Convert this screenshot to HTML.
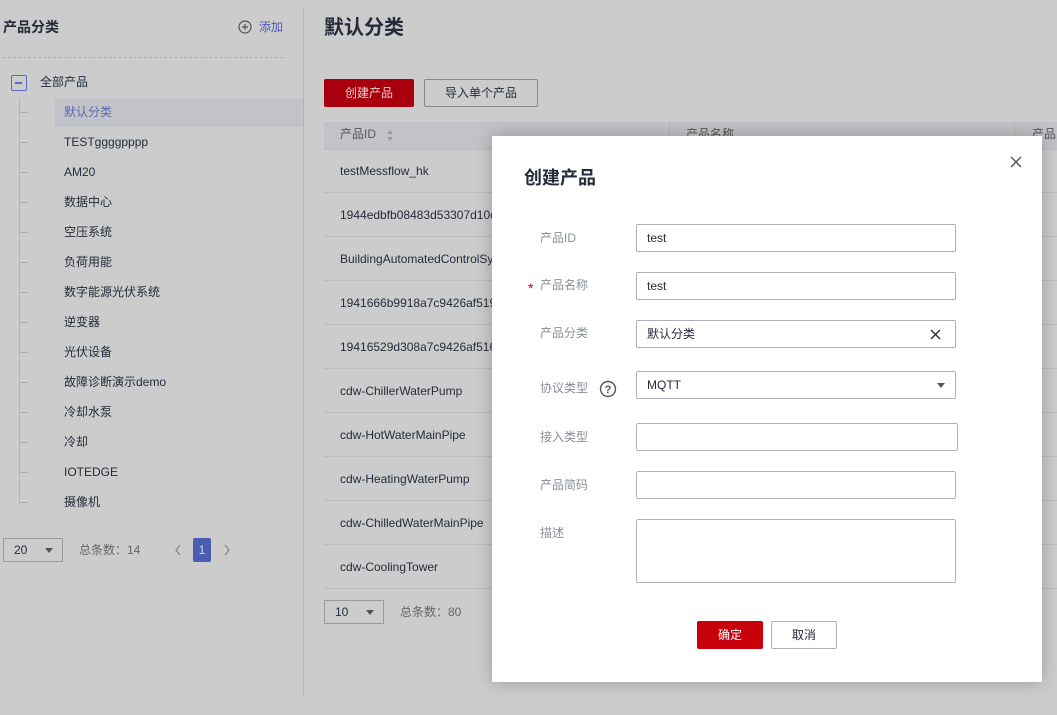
<!DOCTYPE html>
<html><head><meta charset="utf-8"><style>
*{box-sizing:border-box;margin:0;padding:0}
body{width:1057px;height:715px;background:#cccccc;font-family:"Liberation Sans","Noto Sans CJK SC",sans-serif;font-size:12px;line-height:16px;color:#252b3a;position:relative;overflow:hidden}
.a{position:absolute}
.tree{left:64px;font-size:12px;color:#252b3a;height:16px;line-height:16px}
.tick{left:20px;width:8px;height:1px;background:#aaa}
.row{left:324px;width:733px;height:44px;border-bottom:1px solid #bdbdbd}
.row span{position:absolute;left:16px;top:14px;font-size:12px}
.lbl{left:540px;color:#8a8e99;font-size:12px}
.inp{left:636px;width:320px;height:28px;border:1px solid #adb0b8;background:#fff;border-radius:2px;padding:0 10px;line-height:26px;font-size:12px}
</style></head><body>
<div class="a" style="left:3px;top:19px;font-size:14px;font-weight:bold">产品分类</div>
<svg class="a" style="left:238px;top:20px" width="14" height="14" viewBox="0 0 14 14"><circle cx="7" cy="7" r="6" fill="none" stroke="#555" stroke-width="1.2"/><path d="M7 4v6M4 7h6" stroke="#555" stroke-width="1.2"/></svg>
<div class="a" style="left:259px;top:19px;color:#4a5ab3;font-size:12px">添加</div>
<div class="a" style="left:3px;top:57px;width:280px;border-top:1px dashed #b0b0b0"></div>
<div class="a" style="left:11px;top:75px;width:16px;height:16px;border:1.5px solid #5a6ac0;border-radius:2px"><div class="a" style="left:3px;top:6px;width:7px;height:1.5px;background:#5a6ac0"></div></div>
<div class="a" style="left:40px;top:74px">全部产品</div>
<div class="a" style="left:19px;top:98px;width:1px;height:406px;background:#b5b5b5"></div>
<div class="a" style="left:55px;top:99px;width:248px;height:28px;background:#c2c3c8"></div>
<div class="a tree" style="top:104px;color:#5a67b0">默认分类</div>
<div class="a tree" style="top:134px">TESTggggpppp</div>
<div class="a tree" style="top:164px">AM20</div>
<div class="a tree" style="top:194px">数据中心</div>
<div class="a tree" style="top:224px">空压系统</div>
<div class="a tree" style="top:254px">负荷用能</div>
<div class="a tree" style="top:284px">数字能源光伏系统</div>
<div class="a tree" style="top:314px">逆变器</div>
<div class="a tree" style="top:344px">光伏设备</div>
<div class="a tree" style="top:374px">故障诊断演示demo</div>
<div class="a tree" style="top:404px">冷却水泵</div>
<div class="a tree" style="top:434px">冷却</div>
<div class="a tree" style="top:464px">IOTEDGE</div>
<div class="a tree" style="top:494px">摄像机</div>
<div class="a tick" style="top:112px"></div><div class="a tick" style="top:142px"></div><div class="a tick" style="top:172px"></div><div class="a tick" style="top:202px"></div><div class="a tick" style="top:232px"></div><div class="a tick" style="top:262px"></div><div class="a tick" style="top:292px"></div><div class="a tick" style="top:322px"></div><div class="a tick" style="top:352px"></div><div class="a tick" style="top:382px"></div><div class="a tick" style="top:412px"></div><div class="a tick" style="top:442px"></div><div class="a tick" style="top:472px"></div><div class="a tick" style="top:502px"></div>
<div class="a" style="left:3px;top:538px;width:60px;height:24px;border:1px solid #9a9a9a;padding:3px 10px">20<span style="position:absolute;right:9px;top:9px;border:4px solid transparent;border-top:5px solid #555"></span></div>
<div class="a" style="left:79px;top:542px;color:#666">总条数：14</div>
<svg class="a" style="left:174px;top:544px" width="8" height="12"><path d="M6 1L2 6l4 5" fill="none" stroke="#888" stroke-width="1.3"/></svg>
<div class="a" style="left:193px;top:538px;width:18px;height:24px;background:#4a5db3;color:#ddd;text-align:center;line-height:24px;border-radius:2px">1</div>
<svg class="a" style="left:223px;top:544px" width="8" height="12"><path d="M2 1l4 5-4 5" fill="none" stroke="#888" stroke-width="1.3"/></svg>
<div class="a" style="left:303px;top:7px;width:1px;height:690px;background:#b5b5b5"></div>

<div class="a" style="left:324px;top:16px;font-size:20px;line-height:24px;font-weight:bold">默认分类</div>
<div class="a" style="left:324px;top:79px;width:90px;height:28px;background:#a8000d;color:#e8d0d0;text-align:center;line-height:28px;border-radius:2px">创建产品</div>
<div class="a" style="left:424px;top:79px;width:114px;height:28px;border:1px solid #8a8a8a;text-align:center;line-height:26px;border-radius:2px">导入单个产品</div>
<div class="a" style="left:324px;top:122px;width:733px;height:28px;background:#c2c3c6;border-bottom:1px solid #bdbdbd"></div>
<div class="a" style="left:340px;top:126px;color:#555">产品ID</div>
<svg class="a" style="left:386px;top:129px" width="8" height="13"><path d="M1 5l3-4 3 4zM1 8l3 4 3-4z" fill="#999"/></svg>
<div class="a" style="left:669px;top:122px;width:1px;height:28px;background:#b5b5b5"></div>
<div class="a" style="left:686px;top:126px;color:#555">产品名称</div>
<div class="a" style="left:1014px;top:122px;width:1px;height:28px;background:#b5b5b5"></div>
<div class="a" style="left:1032px;top:126px;color:#555">产品</div>
<div class="a row" style="top:149px"><span>testMessflow_hk</span></div>
<div class="a row" style="top:193px"><span>1944edbfb08483d53307d10c</span></div>
<div class="a row" style="top:237px"><span>BuildingAutomatedControlSy</span></div>
<div class="a row" style="top:281px"><span>1941666b9918a7c9426af519</span></div>
<div class="a row" style="top:325px"><span>19416529d308a7c9426af516</span></div>
<div class="a row" style="top:369px"><span>cdw-ChillerWaterPump</span></div>
<div class="a row" style="top:413px"><span>cdw-HotWaterMainPipe</span></div>
<div class="a row" style="top:457px"><span>cdw-HeatingWaterPump</span></div>
<div class="a row" style="top:501px"><span>cdw-ChilledWaterMainPipe</span></div>
<div class="a row" style="top:545px"><span>cdw-CoolingTower</span></div>
<div class="a" style="left:324px;top:600px;width:60px;height:24px;border:1px solid #9a9a9a;padding:3px 10px">10<span style="position:absolute;right:9px;top:9px;border:4px solid transparent;border-top:5px solid #555"></span></div>
<div class="a" style="left:400px;top:604px;color:#666">总条数：80</div>

<div class="a" style="left:492px;top:136px;width:550px;height:546px;background:#fff;box-shadow:0 0 16px rgba(0,0,0,.25)"></div>
<svg class="a" style="left:1010px;top:156px" width="12" height="12"><path d="M1 1l10 10M11 1L1 11" stroke="#555" stroke-width="1.4"/></svg>
<div class="a" style="left:524px;top:166px;font-size:18px;line-height:24px;font-weight:bold">创建产品</div>
<div class="a lbl" style="top:230px">产品ID</div>
<div class="a inp" style="top:224px">test</div>
<div class="a" style="left:528px;top:280px;color:#c7000b;font-size:14px">*</div>
<div class="a lbl" style="top:277px">产品名称</div>
<div class="a inp" style="top:272px">test</div>
<div class="a lbl" style="top:325px">产品分类</div>
<div class="a inp" style="top:320px">默认分类<svg style="position:absolute;right:14px;top:8px" width="11" height="11"><path d="M1 1l9 9M10 1L1 10" stroke="#333" stroke-width="1.5"/></svg></div>
<div class="a lbl" style="top:380px">协议类型</div>
<svg class="a" style="left:599px;top:380px" width="18" height="18"><circle cx="9" cy="9" r="7.5" fill="none" stroke="#555" stroke-width="1.4"/><text x="9" y="13" text-anchor="middle" font-size="11" font-weight="bold" fill="#555" font-family="Liberation Sans">?</text></svg>
<div class="a inp" style="top:371px">MQTT<span style="position:absolute;right:10px;top:11px;border:4px solid transparent;border-top:5px solid #555"></span></div>
<div class="a lbl" style="top:429px">接入类型</div>
<div class="a inp" style="top:423px;width:322px"></div>
<div class="a lbl" style="top:477px">产品简码</div>
<div class="a inp" style="top:471px"></div>
<div class="a lbl" style="top:525px">描述</div>
<div class="a inp" style="top:519px;height:64px"></div>
<div class="a" style="left:697px;top:621px;width:66px;height:28px;background:#c7000b;color:#fff;text-align:center;line-height:28px;border-radius:2px">确定</div>
<div class="a" style="left:771px;top:621px;width:66px;height:28px;border:1px solid #adb0b8;text-align:center;line-height:26px;border-radius:2px">取消</div>
</body></html>
